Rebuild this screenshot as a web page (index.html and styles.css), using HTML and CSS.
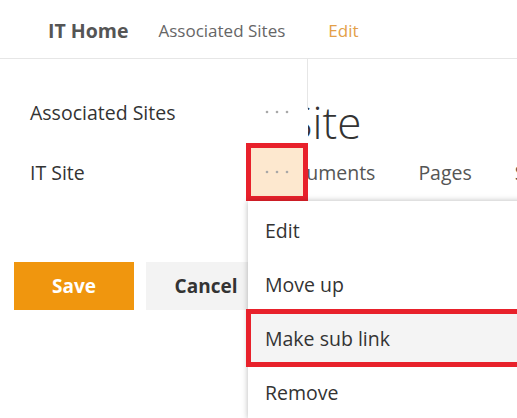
FILE: index.html
```html
<!DOCTYPE html>
<html>
<head>
<meta charset="utf-8">
<link rel="stylesheet" href="styles.css">
</head>
<body>
<div class="page">
  <header class="topnav">
    <span class="home">IT Home</span>
    <span class="navlink">Associated Sites</span>
    <span class="navlink edit">Edit</span>
  </header>
  <main class="content">
    <h1 class="title">IT Site</h1>
    <nav class="sitenav">
      <span>Documents</span>
      <span>Pages</span>
      <span>Site contents</span>
    </nav>
  </main>
  <aside class="panel">
    <div class="row">
      <span class="name">Associated Sites</span>
      <span class="more"><svg width="24" height="4" viewBox="0 0 24 4"><circle cx="2" cy="2" r="1.3"/><circle cx="12" cy="2" r="1.3"/><circle cx="22" cy="2" r="1.3"/></svg></span>
    </div>
    <div class="row">
      <span class="name">IT Site</span>
      <span class="more active"><svg width="24" height="4" viewBox="0 0 24 4"><circle cx="2" cy="2" r="1.3"/><circle cx="12" cy="2" r="1.3"/><circle cx="22" cy="2" r="1.3"/></svg></span>
    </div>
    <div class="actions">
      <button class="btn save">Save</button>
      <button class="btn cancel">Cancel</button>
    </div>
  </aside>
  <ul class="menu">
    <li>Edit</li>
    <li>Move up</li>
    <li class="hl">Make sub link</li>
    <li>Remove</li>
  </ul>
</div>
</body>
</html>
```
FILE: styles.css
```css
html, body {
  margin: 0;
  padding: 0;
  background: #fff;
}
body {
  font-family: "Open Sans", "Noto Sans", sans-serif;
  color: #333;
}
.page {
  position: relative;
  width: 517px;
  height: 418px;
  overflow: hidden;
}
.topnav {
  display: flex;
  align-items: center;
  padding-left: 48px;
  padding-top: 2px;
  box-sizing: border-box;
  height: 59px;
  border-bottom: 1px solid #e6e6e6;
}
.home {
  font-size: 19.5px;
  font-weight: 700;
  color: #555;
  margin-right: 30px;
}
.navlink {
  font-size: 17px;
  color: #666;
  margin-right: 43px;
}
.navlink.edit {
  color: #e3a048;
}
.content {
  padding-left: 243px;
  white-space: nowrap;
}
.title {
  margin: 0;
  padding-top: 38px;
  font-size: 44px;
  font-weight: 300;
  line-height: 50px;
  color: #333;
}
.sitenav {
  display: flex;
  gap: 43px;
  margin-top: 13px;
  margin-left: 28px;
  font-size: 19.5px;
  color: #555;
  line-height: 26px;
}
.panel {
  position: absolute;
  top: 59px;
  left: 0;
  width: 308px;
  bottom: 0;
  background: #fff;
  padding-top: 23px;
  box-sizing: border-box;
}
.panel::before {
  content: "";
  position: absolute;
  right: 0;
  top: 0;
  width: 1px;
  height: 50px;
  background: #e6e6e6;
}
.row {
  display: flex;
  align-items: center;
  height: 60px;
  padding-left: 30px;
  padding-right: 5px;
}
.name {
  flex: 1;
  font-size: 19.5px;
  color: #333;
}
.more {
  width: 52px;
  height: 48px;
  display: flex;
  align-items: center;
  justify-content: center;
  fill: #a8a8a8;
}
.more.active {
  background: #fde8cf;
  outline: 5px solid #e8212b;
}
.actions {
  display: flex;
  gap: 12px;
  padding-left: 14px;
  margin-top: 60px;
}
.btn {
  width: 120px;
  height: 48px;
  border: none;
  font-family: inherit;
  font-size: 19px;
  font-weight: 700;
  padding: 0;
}
.save {
  background: #f0960e;
  color: #fff;
}
.cancel {
  background: #f3f3f3;
  color: #333;
}
.menu {
  position: absolute;
  left: 248px;
  top: 201px;
  right: -20px;
  margin: 0;
  padding: 2px 0 0;
  list-style: none;
  background: #fff;
  box-shadow: 0 0 6px rgba(0, 0, 0, 0.28);
}
.menu li {
  height: 54px;
  display: flex;
  align-items: center;
  padding-left: 17px;
  font-size: 19.5px;
  color: #333;
}
.menu li.hl {
  background: #f4f4f4;
  outline: 5px solid #e8212b;
  outline-offset: -3px;
}
```
